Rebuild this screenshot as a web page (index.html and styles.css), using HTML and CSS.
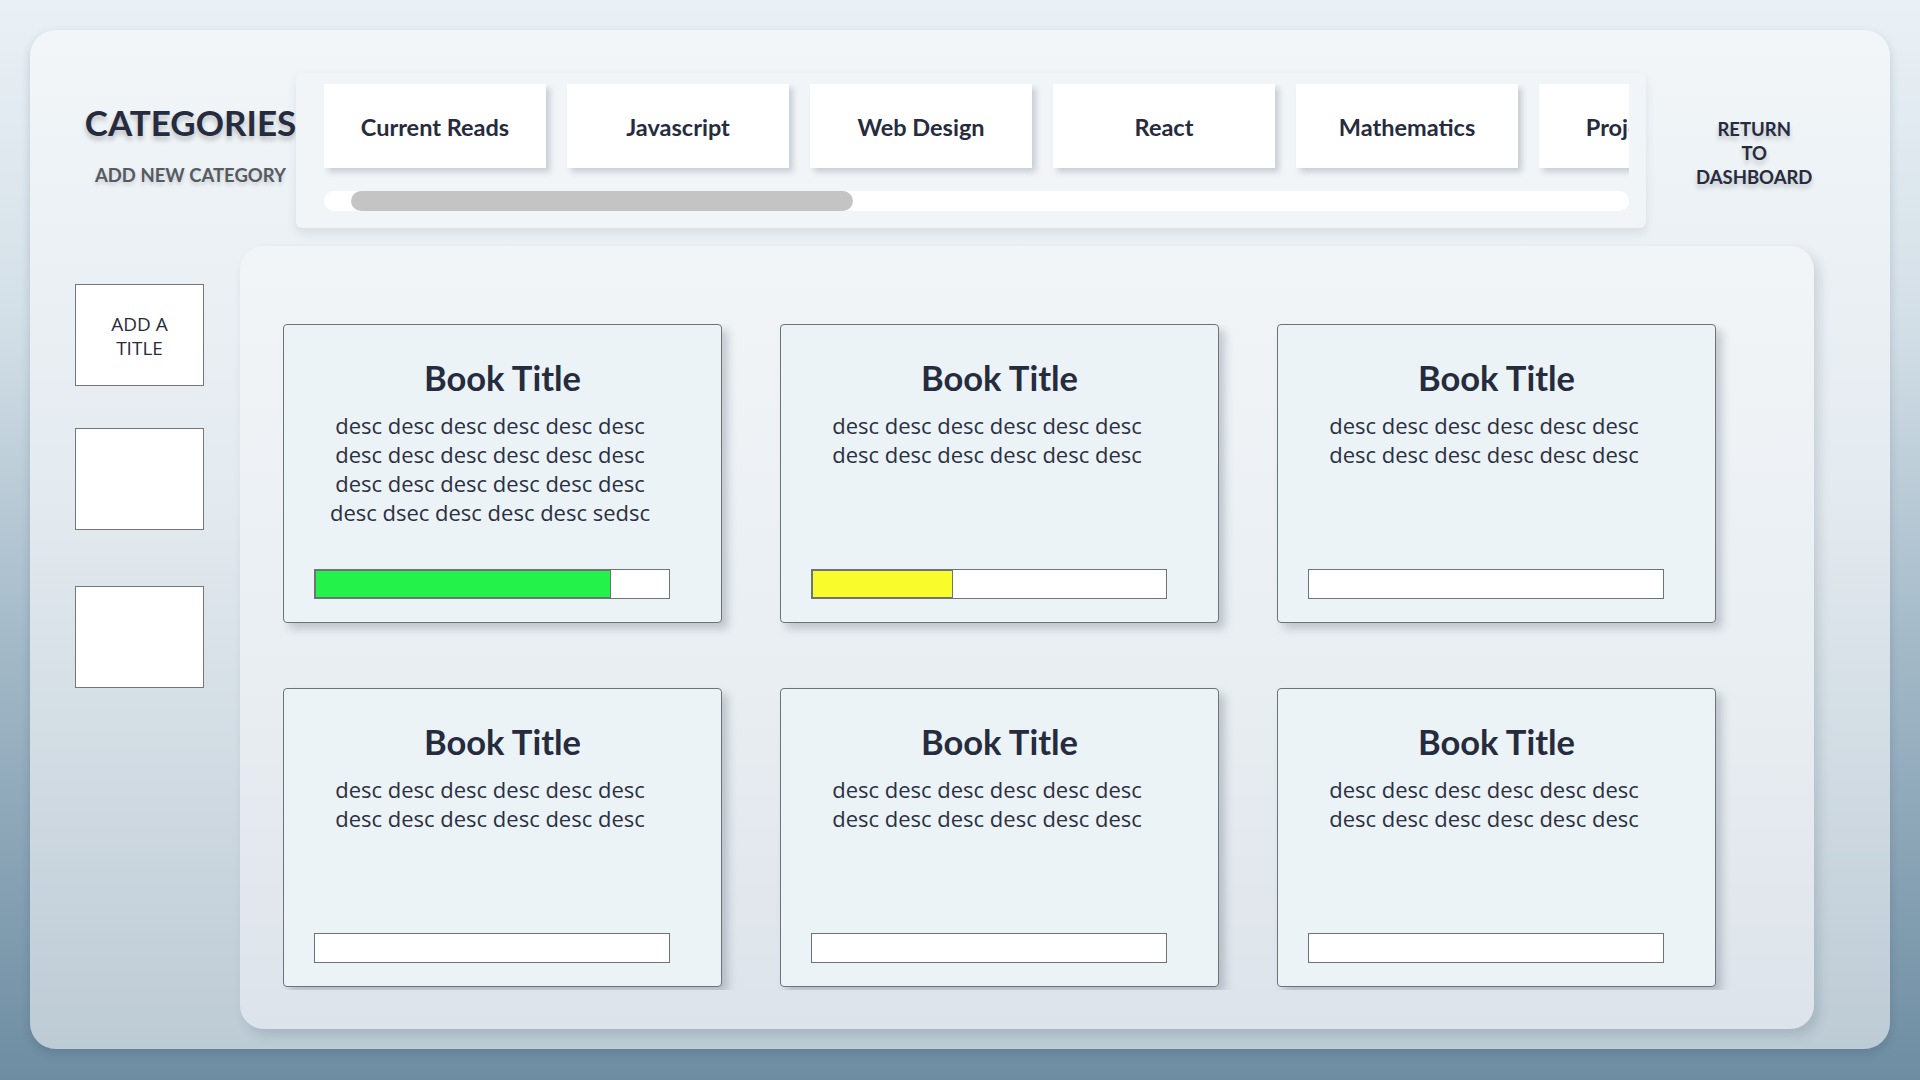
FILE: index.html
```html
<!DOCTYPE html>
<html lang="en">
<head>
<meta charset="utf-8">
<title>Categories</title>
<link rel="stylesheet" href="styles.css">
</head>
<body>
<div class="app">
  <header class="header">
    <div class="cat-block">
      <h1 class="cat-title">CATEGORIES</h1>
      <div class="cat-add">ADD NEW CATEGORY</div>
    </div>
    <div class="strip">
      <div class="tabs-viewport">
        <div class="tabs">
          <div class="tab">Current Reads</div>
          <div class="tab">Javascript</div>
          <div class="tab">Web Design</div>
          <div class="tab">React</div>
          <div class="tab">Mathematics</div>
          <div class="tab">Projects Log</div>
        </div>
      </div>
      <div class="track"><div class="thumb"></div></div>
    </div>
    <div class="return">
      <span class="return-line">RETURN</span>
      <span class="return-line">TO</span>
      <span class="return-line">DASHBOARD</span>
    </div>
  </header>
  <div class="body-row">
    <aside class="sidebar">
      <div class="side-box side-box-1">ADD A TITLE</div>
      <div class="side-box side-box-2"></div>
      <div class="side-box side-box-3"></div>
    </aside>
    <main class="panel">
      <div class="grid-wrap">
        <div class="grid">
          <div class="card">
            <h2 class="card-title">Book Title</h2>
            <p class="card-desc">desc desc desc desc desc desc desc desc desc desc desc desc desc desc desc desc desc desc desc dsec desc desc desc sedsc</p>
            <div class="bar"><div class="fill fill-green" style="width:83.6%"></div></div>
          </div>
          <div class="card">
            <h2 class="card-title">Book Title</h2>
            <p class="card-desc">desc desc desc desc desc desc desc desc desc desc desc desc</p>
            <div class="bar"><div class="fill fill-yellow" style="width:39.7%"></div></div>
          </div>
          <div class="card">
            <h2 class="card-title">Book Title</h2>
            <p class="card-desc">desc desc desc desc desc desc desc desc desc desc desc desc</p>
            <div class="bar"></div>
          </div>
          <div class="card">
            <h2 class="card-title">Book Title</h2>
            <p class="card-desc">desc desc desc desc desc desc desc desc desc desc desc desc</p>
            <div class="bar"></div>
          </div>
          <div class="card">
            <h2 class="card-title">Book Title</h2>
            <p class="card-desc">desc desc desc desc desc desc desc desc desc desc desc desc</p>
            <div class="bar"></div>
          </div>
          <div class="card">
            <h2 class="card-title">Book Title</h2>
            <p class="card-desc">desc desc desc desc desc desc desc desc desc desc desc desc</p>
            <div class="bar"></div>
          </div>
        </div>
      </div>
    </main>
  </div>
</div>
</body>
</html>
```
FILE: styles.css
```css
* { box-sizing: border-box; }

html, body { margin: 0; padding: 0; }

body {
  width: 1920px;
  height: 1080px;
  padding: 30px;
  overflow: hidden;
  background: linear-gradient(180deg, #eaf1f6 0%, #d3dfe7 30%, #a3b9c8 60%, #6e8da2 100%);
  font-family: "Open Sans", "Liberation Sans", sans-serif;
  color: #262b3e;
}

.app {
  width: 1860px;
  height: 1019px;
  border-radius: 26px;
  background: linear-gradient(180deg, #f2f6f9 0%, #e4ebf0 45%, #bdcbd5 100%);
  box-shadow: 0 4px 10px rgba(30, 50, 70, 0.18);
  padding-top: 43px;
  display: flex;
  flex-direction: column;
}

/* header */
.header {
  display: flex;
  align-items: flex-start;
  padding-left: 55px;
  height: 155px;
}

.cat-block {
  width: 211px;
  display: flex;
  flex-direction: column;
  align-items: center;
  padding-top: 29px;
}

.cat-title {
  margin: 0;
  font-family: "Lato", sans-serif;
  font-weight: 700;
  font-size: 35px;
  line-height: 40px;
  color: #262b3e;
  text-shadow: 0 4px 5px rgba(0, 0, 0, 0.22);
  white-space: nowrap;
}

.cat-add {
  margin-top: 21px;
  font-family: "Lato", sans-serif;
  font-weight: 700;
  font-size: 18.5px;
  line-height: 24px;
  color: #565b62;
  text-shadow: 0 3px 4px rgba(0, 0, 0, 0.15);
  white-space: nowrap;
}

.strip {
  width: 1350px;
  height: 155px;
  background: #f1f5f8;
  border-radius: 6px;
  box-shadow: 0 5px 10px rgba(40, 60, 80, 0.1);
  padding: 11px 17px 0 28px;
}

.tabs-viewport {
  width: 1305px;
  height: 107px;
  overflow: hidden;
}

.tabs {
  display: flex;
  gap: 21px;
}

.tab {
  flex: 0 0 222px;
  height: 84px;
  background: #ffffff;
  box-shadow: 4px 4px 6px rgba(40, 50, 70, 0.2);
  display: flex;
  align-items: center;
  justify-content: center;
  font-family: "Lato", sans-serif;
  font-weight: 700;
  font-size: 23.5px;
  color: #262b3e;
  white-space: nowrap;
  padding-top: 2px;
}

.track {
  width: 1305px;
  height: 20px;
  background: #ffffff;
  border-radius: 10px;
  display: flex;
}

.thumb {
  margin-left: 27px;
  width: 502px;
  height: 20px;
  border-radius: 10px;
  background: #c4c4c4;
}

.return {
  display: flex;
  flex-direction: column;
  align-items: center;
  margin-left: 50px;
  margin-top: 44px;
  font-family: "Lato", sans-serif;
  font-weight: 700;
  font-size: 18.5px;
  line-height: 24px;
  text-align: center;
  color: #262b3e;
  text-shadow: 0 4px 5px rgba(0, 0, 0, 0.2);
}

.return-line { display: block; }

/* body */
.body-row {
  display: flex;
  margin-top: 18px;
  padding-left: 45px;
  gap: 36px;
}

.sidebar {
  width: 129px;
  padding-top: 38px;
  display: flex;
  flex-direction: column;
}

.side-box {
  width: 129px;
  height: 102px;
  background: #ffffff;
  border: 1px solid #767676;
  display: flex;
  align-items: center;
  justify-content: center;
  text-align: center;
  padding: 2px 22px 0;
  font-size: 19px;
  line-height: 24px;
  color: #262b3e;
}

.side-box-2 { margin-top: 42px; }
.side-box-3 { margin-top: 56px; }

.panel {
  width: 1574px;
  height: 783px;
  border-radius: 24px;
  background: linear-gradient(180deg, #f1f5f8 0%, #e9eef2 55%, #dce3ea 100%);
  box-shadow: 5px 6px 12px rgba(40, 60, 80, 0.16);
  padding: 78px 0 0 43px;
}

.grid-wrap {
  width: 1460px;
  height: 666px;
  overflow: hidden;
}

.grid {
  display: grid;
  grid-template-columns: repeat(3, 439px);
  grid-auto-rows: 299px;
  column-gap: 58px;
  row-gap: 65px;
}

.card {
  background: #ecf3f7;
  border: 1px solid #6e7378;
  border-radius: 4px;
  box-shadow: 6px 6px 8px rgba(40, 50, 70, 0.22);
  display: flex;
  flex-direction: column;
  align-items: center;
  padding-top: 33px;
}

.card-title {
  margin: 0;
  font-family: "Lato", sans-serif;
  font-weight: 700;
  font-size: 34.5px;
  line-height: 40px;
  color: #262b3e;
}

.card-desc {
  margin: 13px 0 0;
  align-self: stretch;
  padding: 0 60px 0 35px;
  text-align: center;
  font-size: 22px;
  line-height: 29px;
  color: #2b3042;
}

.bar {
  margin-top: auto;
  margin-bottom: 23px;
  align-self: flex-start;
  margin-left: 30px;
  width: 356px;
  height: 30px;
  background: #ffffff;
  border: 1px solid #6e7378;
}

.fill {
  height: 100%;
  border: 1px solid #6e7378;
}

.fill-green { background: #23f24a; }
.fill-yellow { background: #f9fb2b; }
```
